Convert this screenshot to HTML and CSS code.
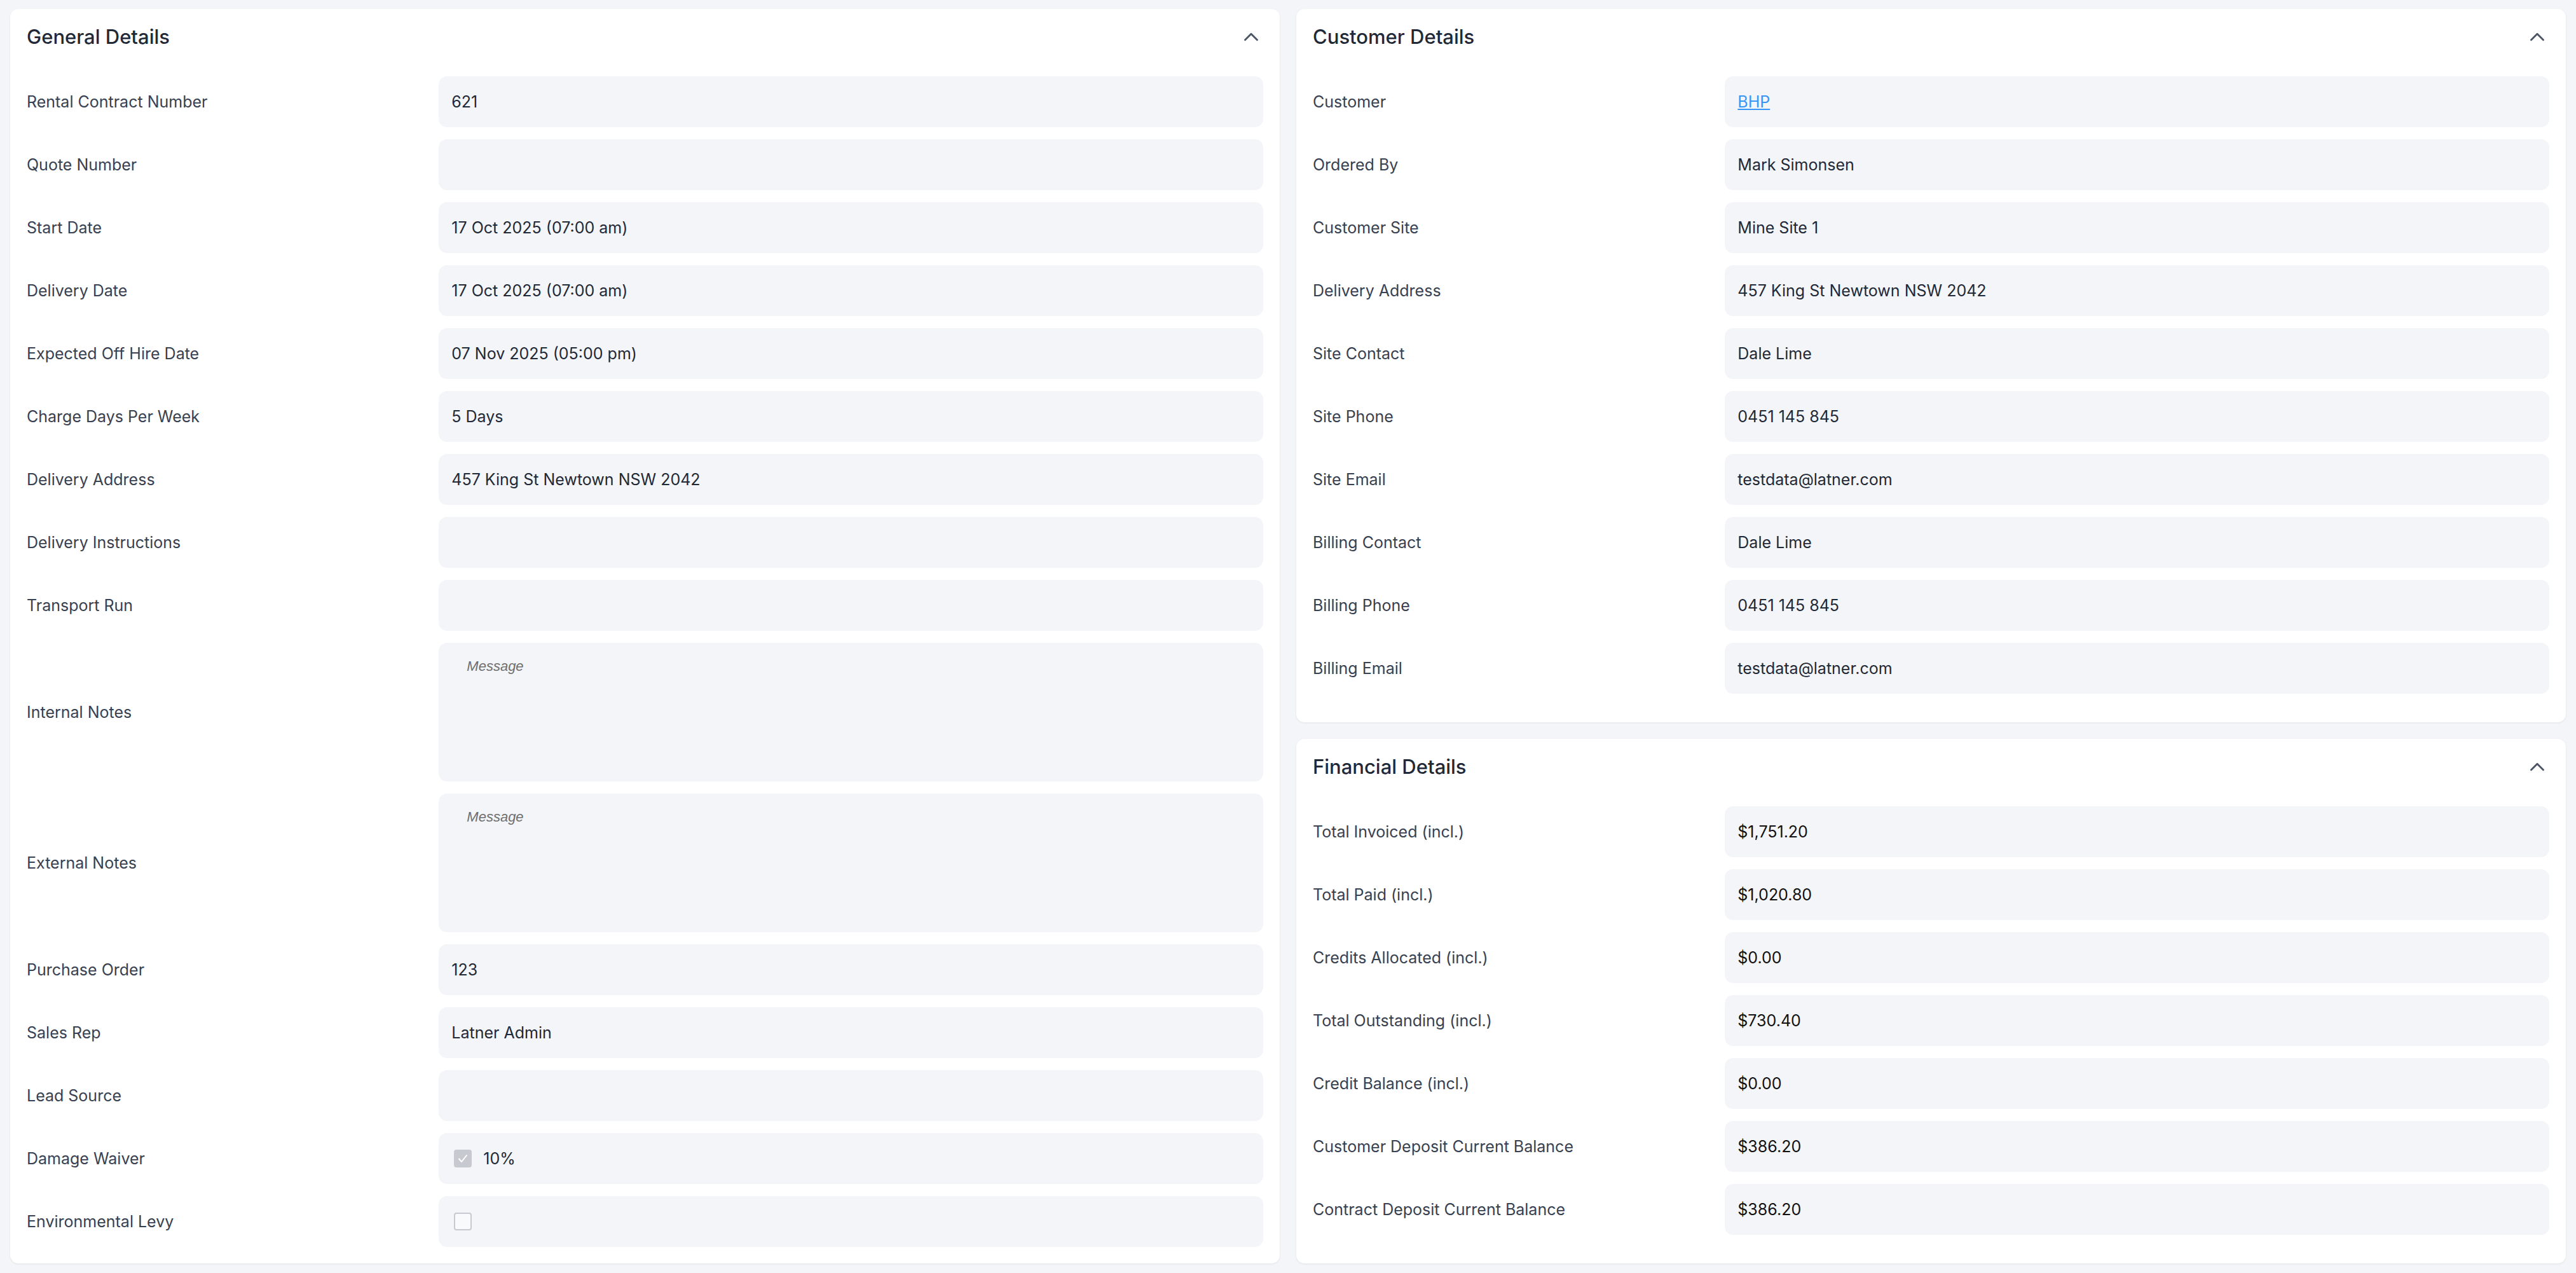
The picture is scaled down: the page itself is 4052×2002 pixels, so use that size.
FILE: index.html
```html
<!DOCTYPE html>
<html lang="en">
<head>
  <meta charset="UTF-8" />
  <title>Rental Contract 621</title>
  <link rel="stylesheet" href="styles.css">
</head>
<body>

  <div class="page">

    <!-- General -->
    <section class="card">
      <div class="card-head">
        <h2>General Details</h2>
        <svg class="chevron" viewBox="0 0 24 24"><path d="M6 15l6-6 6 6"/></svg>
      </div>
      <div class="rows">
        <div class="row"><span class="label">Rental Contract Number</span><div class="field">621</div></div>
        <div class="row"><span class="label">Quote Number</span><div class="field"></div></div>
        <div class="row"><span class="label">Start Date</span><div class="field">17 Oct 2025 (07:00 am)</div></div>
        <div class="row"><span class="label">Delivery Date</span><div class="field">17 Oct 2025 (07:00 am)</div></div>
        <div class="row"><span class="label">Expected Off Hire Date</span><div class="field">07 Nov 2025 (05:00 pm)</div></div>
        <div class="row"><span class="label">Charge Days Per Week</span><div class="field">5 Days</div></div>
        <div class="row"><span class="label">Delivery Address</span><div class="field">457 King St Newtown NSW 2042</div></div>
        <div class="row"><span class="label">Delivery Instructions</span><div class="field"></div></div>
        <div class="row"><span class="label">Transport Run</span><div class="field"></div></div>
        <div class="row"><span class="label">Internal Notes</span><textarea class="notes" placeholder="Message"></textarea></div>
        <div class="row"><span class="label">External Notes</span><textarea class="notes" placeholder="Message"></textarea></div>
        <div class="row"><span class="label">Purchase Order</span><div class="field">123</div></div>
        <div class="row"><span class="label">Sales Rep</span><div class="field">Latner Admin</div></div>
        <div class="row"><span class="label">Lead Source</span><div class="field"></div></div>
        <div class="row">
          <span class="label">Damage Waiver</span>
          <div class="field check-field">
            <span class="check checked">
              <svg viewBox="0 0 24 24"><path d="M6 12.5l4 4.5 8-10"/></svg>
            </span>
            <span>10%</span>
          </div>
        </div>
        <div class="row">
          <span class="label">Environmental Levy</span>
          <div class="field check-field"><span class="check"></span></div>
        </div>
      </div>
    </section>

    <div class="side">

      <!-- Customer -->
      <section class="card">
        <div class="card-head">
          <h2>Customer Details</h2>
          <svg class="chevron" viewBox="0 0 24 24"><path d="M6 15l6-6 6 6"/></svg>
        </div>
        <div class="rows">
          <div class="row"><span class="label">Customer</span><div class="field"><a href="#">BHP</a></div></div>
          <div class="row"><span class="label">Ordered By</span><div class="field">Mark Simonsen</div></div>
          <div class="row"><span class="label">Customer Site</span><div class="field">Mine Site 1</div></div>
          <div class="row"><span class="label">Delivery Address</span><div class="field">457 King St Newtown NSW 2042</div></div>
          <div class="row"><span class="label">Site Contact</span><div class="field">Dale Lime</div></div>
          <div class="row"><span class="label">Site Phone</span><div class="field">0451 145 845</div></div>
          <div class="row"><span class="label">Site Email</span><div class="field">testdata@latner.com</div></div>
          <div class="row"><span class="label">Billing Contact</span><div class="field">Dale Lime</div></div>
          <div class="row"><span class="label">Billing Phone</span><div class="field">0451 145 845</div></div>
          <div class="row"><span class="label">Billing Email</span><div class="field">testdata@latner.com</div></div>
        </div>
      </section>

      <!-- Financial -->
      <section class="card">
        <div class="card-head">
          <h2>Financial Details</h2>
          <svg class="chevron" viewBox="0 0 24 24"><path d="M6 15l6-6 6 6"/></svg>
        </div>
        <div class="rows money">
          <div class="row"><span class="label">Total Invoiced (incl.)</span><div class="field">$1,751.20</div></div>
          <div class="row"><span class="label">Total Paid (incl.)</span><div class="field">$1,020.80</div></div>
          <div class="row"><span class="label">Credits Allocated (incl.)</span><div class="field">$0.00</div></div>
          <div class="row"><span class="label">Total Outstanding (incl.)</span><div class="field">$730.40</div></div>
          <div class="row"><span class="label">Credit Balance (incl.)</span><div class="field">$0.00</div></div>
          <div class="row"><span class="label">Customer Deposit Current Balance</span><div class="field">$386.20</div></div>
          <div class="row"><span class="label">Contract Deposit Current Balance</span><div class="field">$386.20</div></div>
        </div>
      </section>

    </div>
  </div>

</body>
</html>
```

FILE: styles.css
```css
* {
  box-sizing: border-box;
  font-family: 'Inter', 'Noto Sans', sans-serif;
}

body {
  margin: 0;
  background: #f4f5f8;
}

.page {
  display: grid;
  grid-template-columns: 1fr 1fr;
  gap: 26px;
  padding: 14px 16px;
}

.side {
  display: flex;
  flex-direction: column;
  gap: 26px;
}

.side .card {
  flex: 1 1 auto;
}

.card {
  background: #fff;
  border-radius: 13px;
  padding: 26px;
  box-shadow: 0 1px 3px rgba(0, 0, 0, 0.08);
}

.card-head {
  display: flex;
  justify-content: space-between;
  align-items: center;
  height: 36px;
  margin-bottom: 44px;
}

.card-head h2 {
  margin: 0;
  font-size: 31px;
  line-height: 36px;
  font-weight: 500;
  color: #1f2937;
}

.chevron {
  width: 38px;
  height: 38px;
  fill: none;
  stroke: #4b5563;
  stroke-width: 1.8;
  stroke-linecap: round;
  stroke-linejoin: round;
}

.rows {
  display: flex;
  flex-direction: column;
  gap: 19px;
}

.row {
  display: grid;
  grid-template-columns: 1fr 2fr;
  align-items: center;
}

.label {
  font-size: 25px;
  color: #374151;
}

.field {
  height: 80px;
  display: flex;
  align-items: center;
  padding: 0 20px;
  background: #f4f5f9;
  border-radius: 13px;
  font-size: 25px;
  color: #1f2937;
}

.field a {
  color: #3497f7;
  text-decoration: underline;
}

.money .field {
  color: #111;
}

.notes {
  width: 100%;
  height: 218px;
  padding: 24px 44px;
  border: none;
  border-radius: 13px;
  background: #f4f5f9;
  resize: none;
  font-family: 'Liberation Sans', Arial, sans-serif;
  font-size: 22px;
  color: #1f2937;
}

.notes::placeholder {
  font-family: 'Liberation Sans', Arial, sans-serif;
  font-style: italic;
  color: #6e6e6e;
}

.check-field {
  padding-left: 24px;
  gap: 18px;
}

.check {
  width: 28px;
  height: 28px;
  border-radius: 4px;
  border: 2px solid #c6c9cf;
  background: #f9fafb;
  display: flex;
  align-items: center;
  justify-content: center;
}

.check.checked {
  background: #c6c9cf;
}

.check svg {
  width: 24px;
  height: 24px;
  fill: none;
  stroke: #fff;
  stroke-width: 2;
  stroke-linecap: round;
  stroke-linejoin: round;
}
```
